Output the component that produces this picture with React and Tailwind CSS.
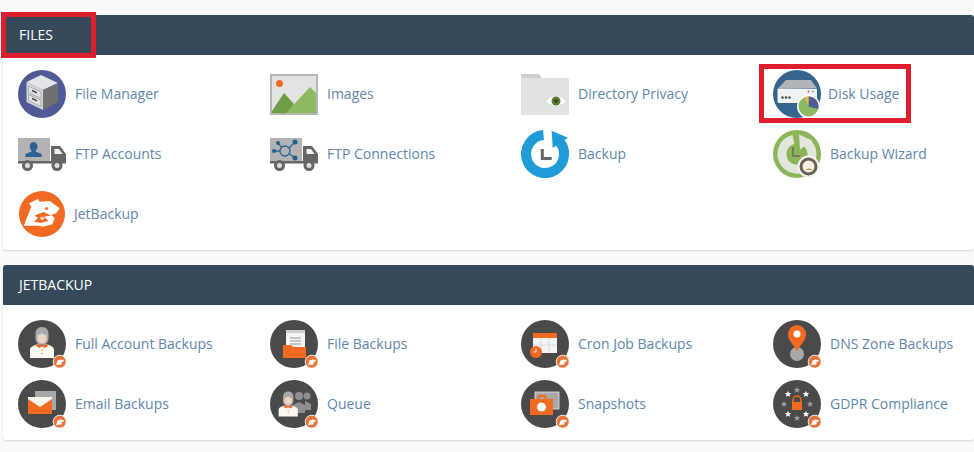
import React from "react";

const Badge = () => (
  <g>
    <circle cx="41.700" cy="41.700" r="6.500" fill="#e8743b" stroke="#f5f1ec" strokeWidth="1" />
    <path d="M38 45l1.800-4.800 2-.3.900-1 .6 1 1.800-.2.900 1.200-2.200 1.300-1.500-.3 1.600 1.200-.7 1.400z" fill="#fff" />
  </g>
);

const Person = ({ x = 0, y = 0, s = 1 }) => (
  <g transform={`translate(${x} ${y}) scale(${s})`}>
    <path d="M24 7c4.500 0 6.500 3 6.500 7v5c0 3-3 6-6.500 6s-6.500-3-6.500-6v-5c0-4 2-7 6.500-7z" fill="#a9a9a9" />
    <path d="M19.500 15c2 0 3.500-1 4.500-2 1 1 2.500 2 4.500 2v4c0 2.500-2.200 4.500-4.500 4.500S19.500 21.500 19.500 19z" fill="#ecd5c4" />
    <path d="M12 38v-8c0-3 3-4.500 8-6l4 2 4-2c5 1.500 8 3 8 6v8z" fill="#fbf8f2" />
    <path d="M19 23.500l5 2.500 5-2.500 1 2.500-3.500 2-2.500-1.500-2.500 1.500-3.500-2z" fill="#f26a21" />
    <circle cx="24" cy="30" r=".7" fill="#f26a21" />
    <circle cx="24" cy="33.500" r=".7" fill="#f26a21" />
  </g>
);

const Truck = ({ children }) => (
  <>
    <rect x="0" y="8" width="32" height="24" rx="1" fill="#b3b3b3" />
    <path d="M33 16h9l6 8v9H33z" fill="#666" />
    <path d="M36.500 19h4.500l3.500 5h-8z" fill="#f2f2f2" />
    <rect x="0" y="31" width="48" height="2.500" fill="#666" />
    <circle cx="9.500" cy="35.500" r="5.500" fill="#666" />
    <circle cx="9.500" cy="35.500" r="2.500" fill="#ddd" />
    <circle cx="39" cy="35.500" r="5.500" fill="#666" />
    <circle cx="39" cy="35.500" r="2.500" fill="#ddd" />
    {children}
  </>
);

const icons = {
  fileManager: (
    <>
      <circle cx="24" cy="24" r="24" fill="#4f5a96" />
      <path d="M8.500 12L23 5l17 8-15 7z" fill="#e4e5e8" />
      <path d="M8.500 12L25 20v20L8.500 32z" fill="#d4d5da" />
      <path d="M25 20l15-7v19l-15 8z" fill="#707070" />
      <path d="M10.500 16l12.500 6v6.500L10.500 22.500zM10.500 24.500l12.500 6v6L10.500 30.500z" fill="#e2e3e7" stroke="#8d8d8d" strokeWidth=".6" />
      <path d="M14 20.500l5 2.400M14 28.500l5 2.400" stroke="#444" strokeWidth="1.400" />
    </>
  ),
  images: (
    <>
      <rect x="0" y="4" width="48" height="41" fill="#b5b5b3" />
      <rect x="2" y="6" width="44" height="37" fill="#e3e3e1" />
      <circle cx="9.500" cy="13.500" r="3.500" fill="#f26a21" />
      <path d="M2 41l12-18 10 11-6 9H2z" fill="#6f9e45" />
      <path d="M16 43l24-26 6 6v20z" fill="#8cb961" />
    </>
  ),
  directory: (
    <>
      <path d="M0 5a1 1 0 0 1 1-1h17l3 4h26a1 1 0 0 1 1 1v35a1 1 0 0 1-1 1H1a1 1 0 0 1-1-1z" fill="#e2e2e2" />
      <path d="M0 4h18l3 4H0z" fill="#cfcfcf" />
      <path d="M25 31q10-9.500 20 0q-10 9.500-20 0z" fill="#fff" />
      <circle cx="35" cy="31" r="4.500" fill="#5f7d3a" />
      <circle cx="35" cy="31" r="2" fill="#34491e" />
    </>
  ),
  disk: (
    <>
      <circle cx="24" cy="24" r="24" fill="#35658f" />
      <path d="M4.500 19l8.500-9h25l6 8.500z" fill="#b0b5b9" />
      <path d="M4.500 19h39.500v12l-2 2H6a1.500 1.500 0 0 1-1.500-1.500z" fill="#f1f2f4" />
      <circle cx="9.500" cy="27.500" r="1.200" fill="#444" />
      <circle cx="13" cy="27.500" r="1.200" fill="#444" />
      <circle cx="16.500" cy="27.500" r="1.200" fill="#444" />
      <circle cx="35.500" cy="21.500" r="1" fill="#d9534f" />
      <circle cx="40" cy="21.500" r="1" fill="#8cb961" />
      <circle cx="35.500" cy="36.500" r="11.500" fill="#fff" />
      <circle cx="35.500" cy="36.500" r="10" fill="#8cb961" />
      <path d="M35.500 36.500v-10a10 10 0 0 1 9.700 12.400z" fill="#4f5a96" />
      <path d="M35.500 36.500l-4-9.200a10 10 0 0 1 4-.8z" fill="#e8b84a" />
    </>
  ),
  ftpAccounts: (
    <Truck>
      <path d="M15.500 12a4 4.500 0 0 1 4 4.500c0 2-.9 3-1.800 4v1l6 2.500v3H7.500v-3l6-2.500v-1c-.9-1-1.800-2-1.800-4a4 4.500 0 0 1 3.800-4.500z" fill="#2d6391" />
    </Truck>
  ),
  ftpConnections: (
    <Truck>
      <g stroke="#2d6391" fill="none" strokeWidth="1.300">
        <circle cx="15" cy="21" r="5" />
        <path d="M10 21H5M11.500 17l-3-3M19 18l5-5M19.500 24l4.500 3" />
      </g>
      <g fill="#1f5f8c">
        <circle cx="4" cy="21" r="2" />
        <circle cx="8" cy="13" r="2" />
        <circle cx="25" cy="12" r="2.500" />
        <circle cx="25" cy="28" r="2.500" />
      </g>
    </Truck>
  ),
  backup: (
    <>
      <path d="M22.500 5.100A19 19 0 1 0 37.500 10.600" fill="none" stroke="#1f9cd8" strokeWidth="10" />
      <path d="M30.700.7L47 7.700 31.700 18z" fill="#1f9cd8" />
      <path d="M21.300 19v9.500h9.400" fill="none" stroke="#666" strokeWidth="3" />
    </>
  ),
  backupWizard: (
    <>
      <circle cx="24" cy="24" r="24" fill="#8cb55a" />
      <path d="M20.500 9.500A15 15 0 1 0 33.500 12.500" fill="none" stroke="#e2e7dc" strokeWidth="9" />
      <path d="M26 4.500l13 6-12 9z" fill="#e2e7dc" />
      <path d="M20 17v9h7" fill="none" stroke="#6b6b6b" strokeWidth="1.500" />
      <circle cx="35.500" cy="36.500" r="11" fill="#f3f3f1" />
      <circle cx="35.500" cy="36.500" r="7.500" fill="#f3efe6" stroke="#6a6156" strokeWidth="3" />
      <path d="M33 40a3 1.500 0 0 1 6 0z" fill="#b9964a" />
    </>
  ),
  jetBackup: (
    <>
      <circle cx="24" cy="24" r="23" fill="#f26a21" />
      <path d="M5.700 35.700l7.600-19-2.300-3.400L20 9l1.700 2.700L31.700 11l10 7.300-3.400 5-5 1.700 3.400 3.300-2.400 6-9.300 2.400-5-1z" fill="#fff" />
      <circle cx="28.500" cy="18.500" r="1.500" fill="#f26a21" />
      <path d="M16.500 25.500l9-3.500 7.500 3.500-7 1.200 4.500 4.300-8 2-6.500-1.500 4-3.500z" fill="#f26a21" />
      <path d="M22 27.500l3-.5 1.500 2-3 1z" fill="#fff" />
    </>
  ),
  fullAccount: (
    <>
      <circle cx="24" cy="24" r="24" fill="#4a4a4a" />
      <Person />
      <Badge />
    </>
  ),
  fileBackups: (
    <>
      <circle cx="24" cy="24" r="24" fill="#4a4a4a" />
      <rect x="16" y="10" width="19" height="19" fill="#cfcfcf" />
      <rect x="16" y="13" width="19" height="16" fill="#f4f4f4" />
      <path d="M20 18h11M20 21h11M20 24h11" stroke="#999" strokeWidth="1" />
      <path d="M13 25h8l2 2h13v11H13z" fill="#f26a21" />
      <Badge />
    </>
  ),
  cron: (
    <>
      <circle cx="24" cy="24" r="24" fill="#4a4a4a" />
      <rect x="12" y="13" width="24" height="20" fill="#f4f4f4" />
      <rect x="12" y="13" width="24" height="5" fill="#f26a21" />
      <path d="M12 25h24M20 18v15M28 18v15" stroke="#cfcfcf" strokeWidth=".7" />
      <circle cx="15" cy="32" r="6" fill="#f26a21" />
      <path d="M15 28.500V32h-2.500" fill="none" stroke="#fff" strokeWidth=".8" />
      <Badge />
    </>
  ),
  dns: (
    <>
      <circle cx="24" cy="24" r="24" fill="#4a4a4a" />
      <circle cx="24" cy="34" r="7" fill="#a8a8a8" />
      <path d="M24 31c-5-8-9-11-9-17a9 9 0 0 1 18 0c0 6-4 9-9 17z" fill="#f26a21" />
      <circle cx="24" cy="14" r="3.500" fill="#fff" />
      <Badge />
    </>
  ),
  emailBackups: (
    <>
      <circle cx="24" cy="24" r="24" fill="#4a4a4a" />
      <rect x="17" y="11" width="21" height="19" fill="#a8a8a8" />
      <rect x="10" y="17" width="24" height="17" fill="#f26a21" />
      <path d="M10 17h24v2l-12 8-12-8z" fill="#f7f4ee" />
      <Badge />
    </>
  ),
  queue: (
    <>
      <circle cx="24" cy="24" r="24" fill="#4a4a4a" />
      <g fill="#8f8f8f">
        <circle cx="29" cy="16" r="4" />
        <path d="M23 33v-8l6-3 6 3v8z" />
        <circle cx="37" cy="16" r="3.500" />
        <path d="M35 21l6 3v6h-6z" />
      </g>
      <Person x={-1} y={6} s={0.8} />
      <Badge />
    </>
  ),
  snapshots: (
    <>
      <circle cx="24" cy="24" r="24" fill="#4a4a4a" />
      <rect x="14" y="12" width="24" height="17" fill="#a8a8a8" stroke="#e5e5e5" strokeWidth=".8" />
      <path d="M16.500 19v-2.500a1.500 1.500 0 0 1 1.500-1.500h6a1.500 1.500 0 0 1 1.500 1.500V19h-2v-2h-5v2z" fill="#f26a21" />
      <rect x="9" y="19" width="23" height="16" fill="#f26a21" />
      <circle cx="20.500" cy="27" r="4.500" fill="#fff" />
      <Badge />
    </>
  ),
  gdpr: (
    <>
      <circle cx="24" cy="24" r="24" fill="#4a4a4a" />
      <path d="M20 23v-3a4 4 0 0 1 8 0v3" fill="none" stroke="#f26a21" strokeWidth="1.500" />
      <rect x="19" y="22" width="10" height="8" fill="#f26a21" />
      {[
        [24, 10, "#9a9a9a"],
        [33, 14, "#fff"],
        [37, 24, "#9a9a9a"],
        [33, 34, "#fff"],
        [24, 38, "#9a9a9a"],
        [15, 34, "#fff"],
        [11, 24, "#9a9a9a"],
        [15, 14, "#fff"],
      ].map(([x, y, c]) => (
        <path
          key={`${x}-${y}`}
          transform={`translate(${x} ${y})`}
          d="M0-3.200l.9 2.100 2.300.2-1.700 1.500.5 2.200L0 1.700-2 2.800l.5-2.200L-3.200-.9l2.300-.2z"
          fill={c}
        />
      ))}
      <Badge />
    </>
  ),
};

const filesItems = [
  ["fileManager", "File Manager"],
  ["images", "Images"],
  ["directory", "Directory Privacy"],
  ["disk", "Disk Usage", "-ml-[2px]"],
  ["ftpAccounts", "FTP Accounts"],
  ["ftpConnections", "FTP Connections"],
  ["backup", "Backup"],
  ["backupWizard", "Backup Wizard"],
  ["jetBackup", "JetBackup", "-ml-px"],
];

const jetItems = [
  ["fullAccount", "Full Account Backups"],
  ["fileBackups", "File Backups"],
  ["cron", "Cron Job Backups"],
  ["dns", "DNS Zone Backups"],
  ["emailBackups", "Email Backups"],
  ["queue", "Queue"],
  ["snapshots", "Snapshots"],
  ["gdpr", "GDPR Compliance"],
];

function Item({ icon, label, nudge }) {
  return (
    <a className="flex h-[60px] items-center gap-[9px]">
      <svg viewBox="0 0 48 48" className="h-12 w-12 shrink-0">
        {icons[icon]}
      </svg>
      <span className={`pb-[2px] text-[14px] text-[#5f87ab] ${nudge || ""}`}>{label}</span>
    </a>
  );
}

function Panel({ title, items, children }) {
  return (
    <section className="relative ml-[3px] rounded-[3px] bg-white shadow-[0_1px_2px_rgba(0,0,0,0.14)]">
      <h2 className="flex h-10 items-center rounded-t-[3px] bg-[#35495a] pb-[2px] pl-4 text-[14px] font-normal text-white">
        {title}
      </h2>
      <div className="grid grid-cols-[252px_251px_252px_1fr] px-[15px] pt-[9px] pb-[6px]">
        {items.map(([icon, label, nudge]) => (
          <Item key={label} icon={icon} label={label} nudge={nudge} />
        ))}
      </div>
      {children}
    </section>
  );
}

export default function App() {
  return (
    <div className="h-[452px] w-[974px] overflow-hidden bg-[#f9f9f9] pt-[15px] font-['Open_Sans',sans-serif]">
      <div className="flex flex-col gap-[15px]">
        <Panel title="FILES" items={filesItems}>
          <div className="absolute top-[-3px] left-[-2px] h-[46px] w-[95px] border-[5px] border-[#dd1f2d]" />
          <div className="absolute top-[49px] left-[756px] h-[59px] w-[152px] border-[5px] border-[#dd1f2d]" />
        </Panel>
        <Panel title="JETBACKUP" items={jetItems} />
      </div>
    </div>
  );
}
